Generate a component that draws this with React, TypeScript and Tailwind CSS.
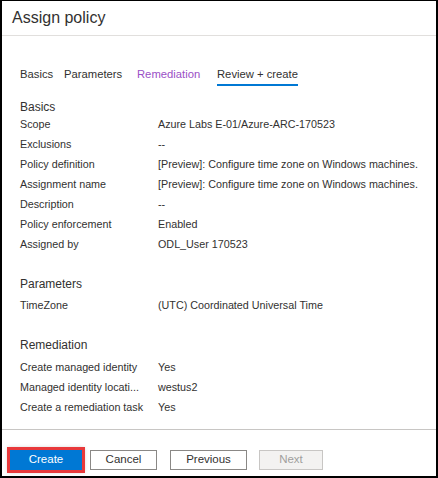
import React from 'react';

const basics = [
  ['Scope', 'Azure Labs E-01/Azure-ARC-170523'],
  ['Exclusions', '--'],
  ['Policy definition', '[Preview]: Configure time zone on Windows machines.'],
  ['Assignment name', '[Preview]: Configure time zone on Windows machines.'],
  ['Description', '--'],
  ['Policy enforcement', 'Enabled'],
  ['Assigned by', 'ODL_User 170523'],
];

const remediation = [
  ['Create managed identity', 'Yes'],
  ['Managed identity locati...', 'westus2'],
  ['Create a remediation task', 'Yes'],
];

const Row = ({ label, value }: { label: string; value: string }) => (
  <div className="flex h-[20px] items-center whitespace-nowrap">
    <div className="w-[138px] shrink-0">{label}</div>
    <div>{value}</div>
  </div>
);

const App = () => {
  return (
    <div
      className="flex h-[478px] w-[438px] flex-col border-t border-r-2 border-b-2 border-l-2 border-black bg-white text-[10.75px] text-[#323130]"
      style={{ fontFamily: '"Liberation Sans", Arial, sans-serif' }}
    >
      {/* header */}
      <div className="flex h-[35px] items-center border-b border-[#e1dfdd] pl-[10px] text-[16px] text-[#323130]">
        Assign policy
      </div>

      <div className="flex flex-1 flex-col pl-[18px]">
        {/* tabs */}
        <div className="mt-[28px] flex text-[11.25px]">
          <div className="flex w-[44px] flex-col">
            <span className="h-[20px] leading-[20px]">Basics</span>
          </div>
          <div className="flex w-[73px] flex-col">
            <span className="h-[20px] leading-[20px]">Parameters</span>
          </div>
          <div className="flex w-[80px] flex-col">
            <span className="h-[20px] leading-[20px] text-[#9a4fc6]">Remediation</span>
          </div>
          <div className="flex flex-col">
            <span className="h-[20px] leading-[20px]">Review + create</span>
            <div className="h-[2px] bg-[#0078d4]" />
          </div>
        </div>

        {/* basics */}
        <div className="mt-[11px] h-[20px] text-[12px] leading-[20px]">Basics</div>
        <div className="-mt-[3px]">
          {basics.map(([l, v]) => (
            <Row key={l} label={l} value={v} />
          ))}
        </div>

        {/* parameters */}
        <div className="mt-[20px] h-[20px] text-[12px] leading-[20px]">Parameters</div>
        <div className="mt-[1px]">
          <Row label="TimeZone" value="(UTC) Coordinated Universal Time" />
        </div>

        {/* remediation */}
        <div className="mt-[20px] h-[20px] text-[12px] leading-[20px]">Remediation</div>
        <div className="mt-[2px]">
          {remediation.map(([l, v]) => (
            <Row key={l} label={l} value={v} />
          ))}
        </div>
      </div>

      {/* footer */}
      <div className="flex h-[47px] items-start border-t border-[#c8c6c4] pt-[20px] pl-[8px] text-[11.5px]">
        <button className="h-[20px] w-[72px] bg-[#0078d4] text-white shadow-[0_0_4px_2px_rgba(0,0,0,0.25)] ring-[3px] ring-[#e8393b]">
          Create
        </button>
        <button className="ml-[8px] h-[20px] w-[67px] border border-[#8a8886] bg-white text-[#323130]">
          Cancel
        </button>
        <button className="ml-[13px] h-[20px] w-[77px] border border-[#8a8886] bg-white text-[#323130]">
          Previous
        </button>
        <button className="ml-[12px] h-[20px] w-[64px] border border-[#c8c6c4] bg-[#f3f2f1] text-[#a19f9d]">
          Next
        </button>
      </div>
    </div>
  );
};

export default App;
